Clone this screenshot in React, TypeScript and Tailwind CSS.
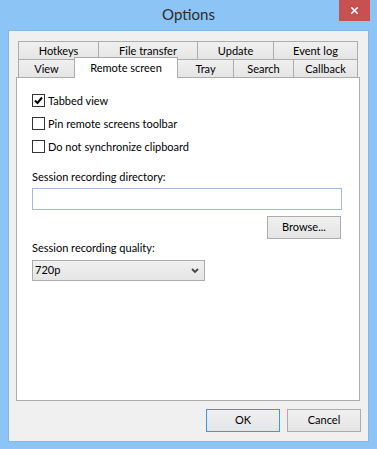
import { X } from 'lucide-react'

const font = { fontFamily: '"Segoe UI", Lato, sans-serif' }

function Tab({ label, w, first }: { label: string; w: string; first?: boolean }) {
  return (
    <div
      className={`${w} ${first ? '' : '-ml-px'} flex h-[18px] items-center justify-center border-x border-t border-[#acacac] bg-gradient-to-b from-[#f0f0f0] to-[#e5e5e5] pt-[2px] text-[11px] text-black`}
    >
      {label}
    </div>
  )
}

function Checkbox({ label, checked }: { label: string; checked?: boolean }) {
  return (
    <div className="flex h-[13px] items-center">
      <div className="flex h-[13px] w-[13px] items-center justify-center border border-[#333333] bg-white">
        {checked && (
          <svg width="9" height="9" viewBox="0 0 9 9">
            <path d="M1 4.5 L3.5 7 L8 1.5" fill="none" stroke="#000" strokeWidth="2" />
          </svg>
        )}
      </div>
      <span className="ml-[3px] text-[11px] leading-[16px] text-black">{label}</span>
    </div>
  )
}

function Button({ label, primary }: { label: string; primary?: boolean }) {
  return (
    <div
      className={`flex h-[23px] w-[74px] items-center justify-center border bg-gradient-to-b from-[#f0f0f0] to-[#e5e5e5] text-[11px] text-black ${
        primary ? 'border-[#3399ff]' : 'border-[#acacac]'
      }`}
    >
      {label}
    </div>
  )
}

export default function App() {
  return (
    <div className="h-[449px] w-[377px] bg-[#8cc4f5]" style={font}>
      <div className="relative flex h-[30px] items-center justify-center">
        <span className="pb-[2px] text-[15px] text-[#2b2b2b]">Options</span>
        <div className="absolute right-[7px] top-0 flex h-[21px] w-[31px] items-center justify-center bg-[#c75050]">
          <X className="h-[11px] w-[11px] text-white" strokeWidth={3.5} />
        </div>
      </div>

      <div className="ml-[8px] flex h-[412px] w-[361px] flex-col border border-[#80b8ec] bg-[#f0f0f0]">
        <div className="ml-[7px] mt-[10px] w-[344px]">
          <div className="ml-[2px] flex">
            <Tab label="Hotkeys" w="w-[81px]" first />
            <Tab label="File transfer" w="w-[100px]" />
            <Tab label="Update" w="w-[77px]" />
            <Tab label="Event log" w="w-[85px]" />
          </div>
          <div className="relative z-10 -mt-[2px] ml-[2px] flex h-[20px] items-end">
            <Tab label="View" w="w-[57px]" first />
            <div className="relative z-10 -mb-px -ml-px flex h-[21px] w-[104px] items-start justify-center border-x border-t border-[#acacac] bg-white pt-[2px] text-[11px] text-black">
              Remote screen
            </div>
            <Tab label="Tray" w="w-[57px]" />
            <Tab label="Search" w="w-[61px]" />
            <Tab label="Callback" w="w-[65px]" />
          </div>

          <div className="h-[324px] border border-[#acacac] bg-white pl-[15px] pt-[16px]">
            <div className="flex flex-col gap-[10px]">
              <Checkbox label="Tabbed view" checked />
              <Checkbox label="Pin remote screens toolbar" />
              <Checkbox label="Do not synchronize clipboard" />
            </div>

            <div className="mt-[16px] text-[11px] leading-[16px] text-black">Session recording directory:</div>
            <div className="mt-[3px] h-[22px] w-[310px] border border-[#a3bbd9] bg-white" />
            <div className="ml-[235px] mt-[6px]">
              <Button label="Browse..." />
            </div>

            <div className="mt-[1px] text-[11px] leading-[16px] text-black">Session recording quality:</div>
            <div className="mt-[4px] flex h-[21px] w-[173px] items-center justify-between border border-[#acacac] bg-gradient-to-b from-[#f0f0f0] to-[#e5e5e5] pl-[2px] pr-[5px] text-[11px] text-black">
              <span>720p</span>
              <svg width="8" height="6" viewBox="0 0 8 6">
                <path d="M1 1 L4 4 L7 1" fill="none" stroke="#444" strokeWidth="1.8" />
              </svg>
            </div>
          </div>
        </div>

        <div className="mt-[8px] flex justify-end gap-[7px] pr-[7px]">
          <Button label="OK" primary />
          <Button label="Cancel" />
        </div>
      </div>
    </div>
  )
}
